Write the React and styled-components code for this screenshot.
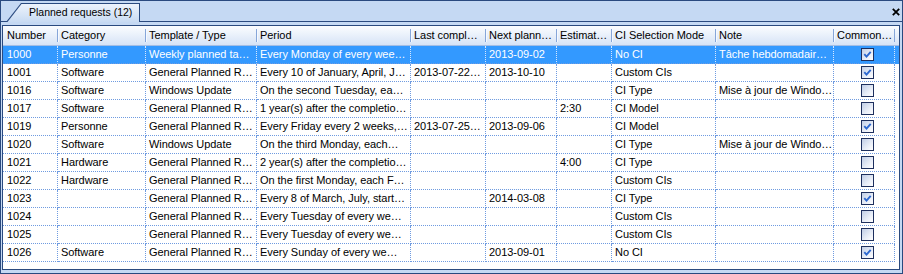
import styled, { createGlobalStyle } from "styled-components";

const GlobalStyle = createGlobalStyle`
  body {
    margin: 0;
    background: #c5d9f3;
    font-family: "Liberation Sans", Arial, sans-serif;
  }
`;

const COLS = "55px 88px 111px 154px 75px 71px 55px 104px 118px 61px";
const DARK = "#2a4a7f";
const DOT = "#6f9be0";

const Window = styled.div`
  width: 903px;
  height: 274px;
  box-sizing: border-box;
  border: 1px solid ${DARK};
  background: #c5d9f3;
  display: flex;
  flex-direction: column;
`;

const TabStrip = styled.div`
  height: 20px;
  flex: none;
  border-bottom: 1px solid ${DARK};
  display: flex;
  align-items: flex-end;
  justify-content: space-between;
  padding: 0 2px 0 5px;
`;

const TabOutline = styled.div`
  width: 134px;
  height: 19px;
  margin-bottom: -1px;
  box-sizing: border-box;
  padding: 1px 1px 0 1px;
  background: ${DARK};
  clip-path: polygon(0 100%, 15px 0, 100% 0, 100% 100%);
`;

const TabFace = styled.div`
  height: 18px;
  padding-left: 22px;
  background: linear-gradient(#edf3fc, #c8dbf3);
  clip-path: polygon(0.5px 100%, 14.5px 0, 100% 0, 100% 100%);
  font-size: 10.5px;
  line-height: 17px;
  color: #000;
  white-space: nowrap;
`;

const Close = styled.svg`
  align-self: flex-start;
  margin-top: 7px;
  width: 8px;
  height: 8px;
`;

const Body = styled.div`
  flex: 1;
  display: flex;
  padding: 3px 2px 3px 1px;
  min-height: 0;
`;

const Grid = styled.div`
  flex: 1;
  border: 1px solid ${DARK};
  background: #fff;
  overflow: hidden;
  font-size: 11px;
  letter-spacing: -0.05px;
  color: #000;
`;

const HeaderRow = styled.div`
  display: grid;
  grid-template-columns: ${COLS};
  height: 20px;
  box-sizing: border-box;
  background: linear-gradient(#fbfdff, #d6e3f6);
  border-bottom: 1px solid #a3bde4;
`;

const HeaderCell = styled.div`
  position: relative;
  padding: 0 0 0 ${(p) => (p.$first ? 4 : 3)}px;
  line-height: 19px;
  white-space: nowrap;
  overflow: hidden;
  text-overflow: ellipsis;
  &::after {
    content: "";
    position: absolute;
    right: 0;
    top: 3px;
    bottom: 3px;
    width: 1px;
    background: #86a6d9;
  }
  &::before {
    content: "";
    position: absolute;
    left: 0;
    top: 3px;
    bottom: 3px;
    width: ${(p) => (p.$first ? 0 : 1)}px;
    background: #f6f9fe;
  }
`;

const Row = styled.div`
  display: grid;
  grid-template-columns: ${COLS};
  height: 18px;
  background: ${(p) => (p.$selected ? "#3399ff" : "#fff")};
  color: ${(p) => (p.$selected ? "#fff" : "#000")};
`;

const Cell = styled.div`
  box-sizing: border-box;
  padding: 0 0 0 ${(p) => (p.$first ? 4 : 3)}px;
  border-right: 1px dotted ${(p) => (p.$selected ? "#d6e8ff" : DOT)};
  border-bottom: 1px dotted ${DOT};
  line-height: 17px;
  white-space: nowrap;
  overflow: hidden;
  text-overflow: ellipsis;
  display: ${(p) => (p.$center ? "flex" : "block")};
  justify-content: center;
  align-items: center;
`;

const Box = styled.span`
  width: 13px;
  height: 13px;
  box-sizing: border-box;
  border: 1px solid #1d2f5e;
  background: linear-gradient(135deg, #c0cde6 0%, #e9eef8 60%, #ffffff 100%);
  display: flex;
  margin-left: 3px;
`;

const Check = ({ on }) => (
  <Box>
    {on && (
      <svg width="11" height="11" viewBox="0 0 11 11">
        <path
          d="M2.3 5.2 L4.5 7.6 L8.7 2.8"
          fill="none"
          stroke="#2d68cf"
          strokeWidth="1.9"
        />
      </svg>
    )}
  </Box>
);

const headers = [
  "Number",
  "Category",
  "Template / Type",
  "Period",
  "Last compl…",
  "Next plann…",
  "Estimat…",
  "CI Selection Mode",
  "Note",
  "Common…",
];

const GP = "General Planned R…";

const rows = [
  ["1000", "Personne", "Weekly planned ta…", "Every Monday of every wee…", "", "2013-09-02", "", "No CI", "Tâche  hebdomadair…", true],
  ["1001", "Software", GP, "Every 10 of January, April, J…", "2013-07-22…", "2013-10-10", "", "Custom CIs", "", true],
  ["1016", "Software", "Windows Update", "On the second Tuesday, ea…", "", "", "", "CI Type", "Mise à jour de Windo…", false],
  ["1017", "Software", GP, "1 year(s) after the completio…", "", "", "2:30", "CI Model", "", false],
  ["1019", "Personne", GP, "Every Friday every 2 weeks,…", "2013-07-25…", "2013-09-06", "", "CI Model", "", true],
  ["1020", "Software", "Windows Update", "On the third Monday, each…", "", "", "", "CI Type", "Mise à jour de Windo…", false],
  ["1021", "Hardware", GP, "2 year(s) after the completio…", "", "", "4:00", "CI Type", "", false],
  ["1022", "Hardware", GP, "On the first Monday, each F…", "", "", "", "Custom CIs", "", false],
  ["1023", "", GP, "Every 8 of March, July, start…", "", "2014-03-08", "", "CI Type", "", true],
  ["1024", "", GP, "Every Tuesday of every we…", "", "", "", "Custom CIs", "", false],
  ["1025", "", GP, "Every Tuesday of every we…", "", "", "", "Custom CIs", "", false],
  ["1026", "Software", GP, "Every Sunday of every we…", "", "2013-09-01", "", "No CI", "", true],
];

const App = () => {
  return (
    <>
      <GlobalStyle />
      <Window>
        <TabStrip>
          <TabOutline>
            <TabFace>Planned requests (12)</TabFace>
          </TabOutline>
          <Close viewBox="0 0 8 8">
            <path d="M0.8 0.8 L7.2 7.2 M7.2 0.8 L0.8 7.2" stroke="#000" strokeWidth="1.8" />
          </Close>
        </TabStrip>
        <Body>
          <Grid>
            <HeaderRow>
              {headers.map((h, i) => (
                <HeaderCell key={h} $first={i === 0}>
                  {h}
                </HeaderCell>
              ))}
            </HeaderRow>
            {rows.map((r, ri) => {
              const selected = ri === 0;
              return (
                <Row key={r[0]} $selected={selected}>
                  {r.slice(0, 9).map((v, ci) => (
                    <Cell key={ci} $first={ci === 0} $selected={selected}>
                      {v}
                    </Cell>
                  ))}
                  <Cell $center $selected={selected}>
                    <Check on={r[9]} />
                  </Cell>
                </Row>
              );
            })}
          </Grid>
        </Body>
      </Window>
    </>
  );
};

export default App;
